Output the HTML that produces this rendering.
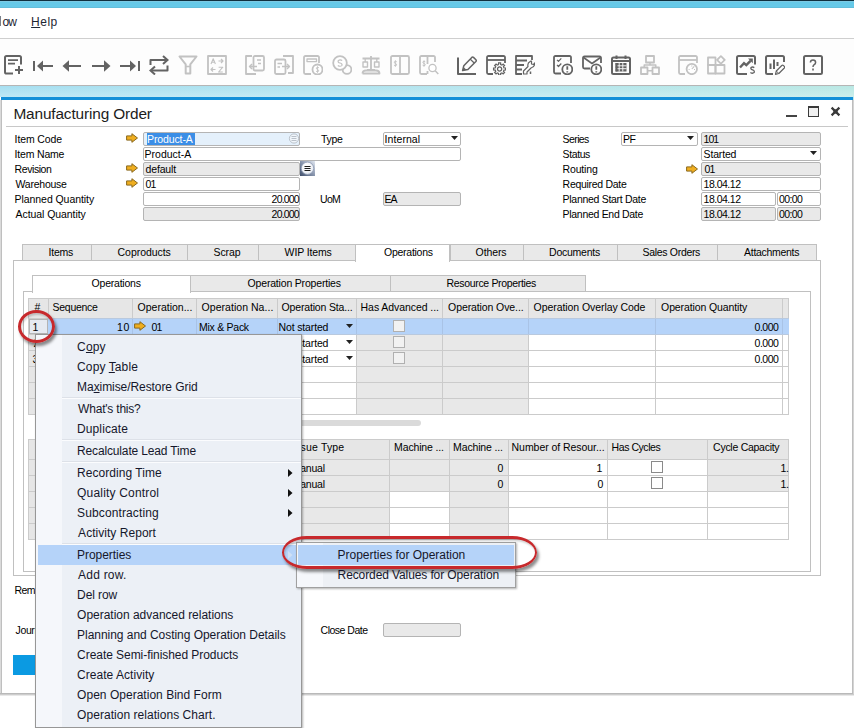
<!DOCTYPE html>
<html><head><meta charset="utf-8"><title>Manufacturing Order</title>
<style>
html,body{margin:0;padding:0;}
body{width:854px;height:728px;overflow:hidden;background:#fff;position:relative;font-family:"Liberation Sans",sans-serif;font-size:11px;}
#r{position:absolute;left:0;top:0;width:854px;height:728px;overflow:hidden;}
#r div,#r svg{position:absolute;}
u{text-decoration:underline;}
</style></head><body><div id="r">
<div style="left:0px;top:0px;width:854px;height:1px;background:#10303f;"></div>
<div style="left:0px;top:1px;width:854px;height:7px;background:#66c9e8;"></div>
<div style="left:0px;top:1px;width:854px;height:1px;background:#7ccae4;"></div>
<div style="left:0px;top:7px;width:854px;height:1px;background:#62bedb;"></div>
<div style="left:0px;top:8px;width:854px;height:30px;background:#fff;"></div>
<div style="left:0px;top:38px;width:854px;height:1px;background:#cfcfcf;"></div>
<div style="left:0px;top:39px;width:854px;height:46px;background:#fdfdfd;"></div>
<div style="left:0px;top:85px;width:854px;height:1px;background:#b5b5b5;"></div>
<div style="left:0px;top:86px;width:854px;height:11px;background:linear-gradient(rgba(255,255,255,0),rgba(255,255,255,0.28)),linear-gradient(to right,#a6dff1,#b4e5ee 55%,#b9e8e4);"></div>
<div style="left:0px;top:16px;width:1px;height:10px;background:#7a808a;"></div>
<div style="left:0px;top:97px;width:854px;height:597px;background:#fff;"></div>
<div style="left:1px;top:97px;width:852px;height:3px;background:#1490d8;"></div>
<div style="left:853px;top:97px;width:1px;height:3px;background:#bfe8e8;"></div>
<div style="left:0px;top:100px;width:1px;height:594px;background:#dadada;"></div>
<div style="left:1px;top:100px;width:1px;height:594px;background:#bfbfbf;"></div>
<div style="left:852px;top:100px;width:1px;height:595px;background:#bdbdbd;"></div>
<div style="left:853px;top:100px;width:1px;height:596px;background:#d4d4d4;"></div>
<div style="left:0px;top:693px;width:853px;height:1px;background:#b9b9b9;"></div>
<div style="left:0px;top:694px;width:854px;height:1px;background:#cdcdcd;"></div>
<div style="left:0px;top:695px;width:854px;height:1px;background:#e8e8e8;"></div>
<div style="left:6px;top:126px;width:842px;height:1px;background:#c8c8c8;"></div>
<div style="left:786px;top:115px;width:11px;height:2px;background:#444;"></div>
<div style="left:808px;top:106px;width:11px;height:11px;background:#f0f0f0;border:1px solid #3a3a3a;box-sizing:border-box;border-top-width:2px;"></div>
<svg style="left:830px;top:106px" width="11" height="11" viewBox="0 0 11 11"><path d="M1.6 1.6 L9.4 9.4 M9.4 1.6 L1.6 9.4" stroke="#3a3a3a" stroke-width="2.2"/><rect x="3.4" y="3.4" width="4.2" height="4.2" fill="#3a3a3a"/></svg>
<div style="left:143px;top:132px;width:157px;height:14px;background:#e4f0fb;border:1px solid #b4b4b4;border-radius:2px;box-sizing:border-box;"></div>
<div style="left:147px;top:133px;width:48px;height:12px;background:#3b8ee6;"></div>
<svg style="left:288px;top:132px" width="12" height="13" viewBox="0 0 12 13"><circle cx="6" cy="6.5" r="4.6" fill="#f1f6fb" stroke="#b3bbc4" stroke-width="0.9"/><path d="M3.5 4.5 H8.5 M3.5 6.5 H8.5 M3.5 8.5 H8.5" stroke="#b3bbc4" stroke-width="0.9"/></svg>
<div style="left:143px;top:147px;width:318px;height:14px;background:#fff;border:1px solid #b4b4b4;border-radius:2px;box-sizing:border-box;"></div>
<div style="left:143px;top:162px;width:157px;height:14px;background:#e9e9e9;border:1px solid #b4b4b4;border-radius:2px;box-sizing:border-box;"></div>
<svg style="left:300px;top:161px" width="15" height="15" viewBox="0 0 15 15"><defs><linearGradient id="gb" x1="1" y1="0" x2="0" y2="1"><stop offset="0" stop-color="#e2e8f1"/><stop offset="0.5" stop-color="#8895ad"/><stop offset="1" stop-color="#3f4e6b"/></linearGradient><radialGradient id="gc" cx="0.45" cy="0.35" r="0.7"><stop offset="0" stop-color="#ffffff"/><stop offset="0.7" stop-color="#eef1f6"/><stop offset="1" stop-color="#c3ccda"/></radialGradient></defs><rect x="0" y="0" width="15" height="15" fill="url(#gb)"/><circle cx="7.5" cy="7.3" r="6.2" fill="url(#gc)" stroke="#8e9bb3" stroke-width="0.8"/><path d="M4.5 5.5 H10.5 M4.5 7.5 H10.5 M4.5 9.5 H10.5" stroke="#1c1c1c" stroke-width="1"/></svg>
<div style="left:143px;top:177px;width:157px;height:14px;background:#fff;border:1px solid #b4b4b4;border-radius:2px;box-sizing:border-box;"></div>
<div style="left:143px;top:192px;width:157px;height:14px;background:#fff;border:1px solid #b4b4b4;border-radius:2px;box-sizing:border-box;"></div>
<div style="left:143px;top:207px;width:157px;height:14px;background:#e9e9e9;border:1px solid #b4b4b4;border-radius:2px;box-sizing:border-box;"></div>
<svg style="left:126px;top:133px" width="12" height="10" viewBox="0 0 12 10"><path d="M0.6 2.9 H5.9 V0.7 L11.5 5 L5.9 9.3 V7.1 H0.6 Z" fill="#efae20" stroke="#8a681c" stroke-width="1" stroke-linejoin="round"/></svg>
<svg style="left:126px;top:163px" width="12" height="10" viewBox="0 0 12 10"><path d="M0.6 2.9 H5.9 V0.7 L11.5 5 L5.9 9.3 V7.1 H0.6 Z" fill="#efae20" stroke="#8a681c" stroke-width="1" stroke-linejoin="round"/></svg>
<svg style="left:126px;top:178px" width="12" height="10" viewBox="0 0 12 10"><path d="M0.6 2.9 H5.9 V0.7 L11.5 5 L5.9 9.3 V7.1 H0.6 Z" fill="#efae20" stroke="#8a681c" stroke-width="1" stroke-linejoin="round"/></svg>
<div style="left:383px;top:132px;width:78px;height:14px;background:#fff;border:1px solid #b4b4b4;border-radius:2px;box-sizing:border-box;"></div>
<svg style="left:451px;top:136px" width="7" height="4" viewBox="0 0 7 4"><path d="M0 0 H7 L3.5 4 Z" fill="#222"/></svg>
<div style="left:383px;top:192px;width:78px;height:14px;background:#e9e9e9;border:1px solid #b4b4b4;border-radius:2px;box-sizing:border-box;"></div>
<div style="left:621px;top:132px;width:77px;height:14px;background:#fff;border:1px solid #b4b4b4;border-radius:2px;box-sizing:border-box;"></div>
<svg style="left:687px;top:136px" width="7" height="4" viewBox="0 0 7 4"><path d="M0 0 H7 L3.5 4 Z" fill="#222"/></svg>
<div style="left:701px;top:132px;width:120px;height:14px;background:#e9e9e9;border:1px solid #b4b4b4;border-radius:2px;box-sizing:border-box;"></div>
<div style="left:701px;top:147px;width:120px;height:14px;background:#fff;border:1px solid #b4b4b4;border-radius:2px;box-sizing:border-box;"></div>
<svg style="left:810px;top:151px" width="7" height="4" viewBox="0 0 7 4"><path d="M0 0 H7 L3.5 4 Z" fill="#222"/></svg>
<div style="left:701px;top:162px;width:120px;height:14px;background:#e9e9e9;border:1px solid #b4b4b4;border-radius:2px;box-sizing:border-box;"></div>
<svg style="left:686px;top:163.5px" width="12" height="10" viewBox="0 0 12 10"><path d="M0.6 2.9 H5.9 V0.7 L11.5 5 L5.9 9.3 V7.1 H0.6 Z" fill="#efae20" stroke="#8a681c" stroke-width="1" stroke-linejoin="round"/></svg>
<div style="left:701px;top:177px;width:120px;height:14px;background:#fff;border:1px solid #b4b4b4;border-radius:2px;box-sizing:border-box;"></div>
<div style="left:701px;top:192px;width:75px;height:14px;background:#fff;border:1px solid #b4b4b4;border-radius:2px;box-sizing:border-box;"></div>
<div style="left:777px;top:192px;width:44px;height:14px;background:#fff;border:1px solid #b4b4b4;border-radius:2px;box-sizing:border-box;"></div>
<div style="left:701px;top:207px;width:75px;height:14px;background:#e9e9e9;border:1px solid #b4b4b4;border-radius:2px;box-sizing:border-box;"></div>
<div style="left:777px;top:207px;width:44px;height:14px;background:#e9e9e9;border:1px solid #b4b4b4;border-radius:2px;box-sizing:border-box;"></div>
<div style="left:13px;top:260px;width:808px;height:316px;background:#fff;border:1px solid #c0c0c0;box-sizing:border-box;"></div>
<div style="left:22px;top:244px;width:70px;height:17px;background:#e9e9e9;border:1px solid #c0c0c0;box-sizing:border-box;"></div>
<div style="left:91px;top:244px;width:97px;height:17px;background:#e9e9e9;border:1px solid #c0c0c0;box-sizing:border-box;"></div>
<div style="left:187px;top:244px;width:72px;height:17px;background:#e9e9e9;border:1px solid #c0c0c0;box-sizing:border-box;"></div>
<div style="left:258px;top:244px;width:98px;height:17px;background:#e9e9e9;border:1px solid #c0c0c0;box-sizing:border-box;"></div>
<div style="left:450px;top:244px;width:74px;height:17px;background:#e9e9e9;border:1px solid #c0c0c0;box-sizing:border-box;"></div>
<div style="left:523px;top:244px;width:95px;height:17px;background:#e9e9e9;border:1px solid #c0c0c0;box-sizing:border-box;"></div>
<div style="left:617px;top:244px;width:101px;height:17px;background:#e9e9e9;border:1px solid #c0c0c0;box-sizing:border-box;"></div>
<div style="left:717px;top:244px;width:100px;height:17px;background:#e9e9e9;border:1px solid #c0c0c0;box-sizing:border-box;"></div>
<div style="left:355px;top:244px;width:95px;height:18px;background:#fff;border:1px solid #c0c0c0;box-sizing:border-box;border-bottom:none;"></div>
<div style="left:23px;top:291px;width:788px;height:281px;background:#fff;border:1px solid #c0c0c0;box-sizing:border-box;"></div>
<div style="left:190px;top:275px;width:201px;height:17px;background:#e9e9e9;border:1px solid #c0c0c0;box-sizing:border-box;"></div>
<div style="left:390px;top:275px;width:196px;height:17px;background:#e9e9e9;border:1px solid #c0c0c0;box-sizing:border-box;"></div>
<div style="left:32px;top:275px;width:159px;height:18px;background:#fff;border:1px solid #c0c0c0;box-sizing:border-box;border-bottom:none;"></div>
<div style="left:28px;top:298px;width:761px;height:117px;background:#cbcbcb;"></div>
<div style="left:29px;top:299px;width:19px;height:19px;background:#e6e6e6;"></div>
<div style="left:49px;top:299px;width:83px;height:19px;background:#e6e6e6;"></div>
<div style="left:133px;top:299px;width:63px;height:19px;background:#e6e6e6;"></div>
<div style="left:197px;top:299px;width:80px;height:19px;background:#e6e6e6;"></div>
<div style="left:278px;top:299px;width:78px;height:19px;background:#e6e6e6;"></div>
<div style="left:357px;top:299px;width:85px;height:19px;background:#e6e6e6;"></div>
<div style="left:443px;top:299px;width:85px;height:19px;background:#e6e6e6;"></div>
<div style="left:529px;top:299px;width:126px;height:19px;background:#e6e6e6;"></div>
<div style="left:656px;top:299px;width:126px;height:19px;background:#e6e6e6;"></div>
<div style="left:783px;top:299px;width:5px;height:19px;background:#e6e6e6;"></div>
<div style="left:29px;top:319px;width:19px;height:15px;background:#e8eef6;"></div>
<div style="left:49px;top:319px;width:83px;height:15px;background:#b5d3f9;"></div>
<div style="left:133px;top:319px;width:63px;height:15px;background:#b5d3f9;"></div>
<div style="left:197px;top:319px;width:80px;height:15px;background:#b5d3f9;"></div>
<div style="left:278px;top:319px;width:78px;height:15px;background:#b5d3f9;"></div>
<div style="left:357px;top:319px;width:85px;height:15px;background:#b5d3f9;"></div>
<div style="left:443px;top:319px;width:85px;height:15px;background:#b5d3f9;"></div>
<div style="left:529px;top:319px;width:126px;height:15px;background:#b5d3f9;"></div>
<div style="left:656px;top:319px;width:126px;height:15px;background:#b5d3f9;"></div>
<div style="left:783px;top:319px;width:5px;height:15px;background:#b5d3f9;"></div>
<div style="left:29px;top:335px;width:19px;height:15px;background:#e6e6e6;"></div>
<div style="left:49px;top:335px;width:83px;height:15px;background:#fff;"></div>
<div style="left:133px;top:335px;width:63px;height:15px;background:#fff;"></div>
<div style="left:197px;top:335px;width:80px;height:15px;background:#fff;"></div>
<div style="left:278px;top:335px;width:78px;height:15px;background:#fff;"></div>
<div style="left:357px;top:335px;width:85px;height:15px;background:#e8e8e8;"></div>
<div style="left:443px;top:335px;width:85px;height:15px;background:#e8e8e8;"></div>
<div style="left:529px;top:335px;width:126px;height:15px;background:#fff;"></div>
<div style="left:656px;top:335px;width:126px;height:15px;background:#fff;"></div>
<div style="left:783px;top:335px;width:5px;height:15px;background:#fff;"></div>
<div style="left:29px;top:351px;width:19px;height:15px;background:#e6e6e6;"></div>
<div style="left:49px;top:351px;width:83px;height:15px;background:#fff;"></div>
<div style="left:133px;top:351px;width:63px;height:15px;background:#fff;"></div>
<div style="left:197px;top:351px;width:80px;height:15px;background:#fff;"></div>
<div style="left:278px;top:351px;width:78px;height:15px;background:#fff;"></div>
<div style="left:357px;top:351px;width:85px;height:15px;background:#e8e8e8;"></div>
<div style="left:443px;top:351px;width:85px;height:15px;background:#e8e8e8;"></div>
<div style="left:529px;top:351px;width:126px;height:15px;background:#fff;"></div>
<div style="left:656px;top:351px;width:126px;height:15px;background:#fff;"></div>
<div style="left:783px;top:351px;width:5px;height:15px;background:#fff;"></div>
<div style="left:29px;top:367px;width:19px;height:15px;background:#e6e6e6;"></div>
<div style="left:49px;top:367px;width:83px;height:15px;background:#fff;"></div>
<div style="left:133px;top:367px;width:63px;height:15px;background:#fff;"></div>
<div style="left:197px;top:367px;width:80px;height:15px;background:#fff;"></div>
<div style="left:278px;top:367px;width:78px;height:15px;background:#fff;"></div>
<div style="left:357px;top:367px;width:85px;height:15px;background:#e8e8e8;"></div>
<div style="left:443px;top:367px;width:85px;height:15px;background:#e8e8e8;"></div>
<div style="left:529px;top:367px;width:126px;height:15px;background:#fff;"></div>
<div style="left:656px;top:367px;width:126px;height:15px;background:#fff;"></div>
<div style="left:783px;top:367px;width:5px;height:15px;background:#fff;"></div>
<div style="left:29px;top:383px;width:19px;height:15px;background:#e6e6e6;"></div>
<div style="left:49px;top:383px;width:83px;height:15px;background:#fff;"></div>
<div style="left:133px;top:383px;width:63px;height:15px;background:#fff;"></div>
<div style="left:197px;top:383px;width:80px;height:15px;background:#fff;"></div>
<div style="left:278px;top:383px;width:78px;height:15px;background:#fff;"></div>
<div style="left:357px;top:383px;width:85px;height:15px;background:#e8e8e8;"></div>
<div style="left:443px;top:383px;width:85px;height:15px;background:#e8e8e8;"></div>
<div style="left:529px;top:383px;width:126px;height:15px;background:#fff;"></div>
<div style="left:656px;top:383px;width:126px;height:15px;background:#fff;"></div>
<div style="left:783px;top:383px;width:5px;height:15px;background:#fff;"></div>
<div style="left:29px;top:399px;width:19px;height:15px;background:#e6e6e6;"></div>
<div style="left:49px;top:399px;width:83px;height:15px;background:#fff;"></div>
<div style="left:133px;top:399px;width:63px;height:15px;background:#fff;"></div>
<div style="left:197px;top:399px;width:80px;height:15px;background:#fff;"></div>
<div style="left:278px;top:399px;width:78px;height:15px;background:#fff;"></div>
<div style="left:357px;top:399px;width:85px;height:15px;background:#e8e8e8;"></div>
<div style="left:443px;top:399px;width:85px;height:15px;background:#e8e8e8;"></div>
<div style="left:529px;top:399px;width:126px;height:15px;background:#fff;"></div>
<div style="left:656px;top:399px;width:126px;height:15px;background:#fff;"></div>
<div style="left:783px;top:399px;width:5px;height:15px;background:#fff;"></div>
<div style="left:48px;top:318px;width:741px;height:17px;background:#b5d3f9;"></div>
<div style="left:132px;top:318px;width:1px;height:17px;background:#a9c3e6;"></div>
<div style="left:196px;top:318px;width:1px;height:17px;background:#a9c3e6;"></div>
<div style="left:277px;top:318px;width:1px;height:17px;background:#a9c3e6;"></div>
<div style="left:356px;top:318px;width:1px;height:17px;background:#a9c3e6;"></div>
<div style="left:442px;top:318px;width:1px;height:17px;background:#a9c3e6;"></div>
<div style="left:528px;top:318px;width:1px;height:17px;background:#a9c3e6;"></div>
<div style="left:655px;top:318px;width:1px;height:17px;background:#a9c3e6;"></div>
<div style="left:782px;top:318px;width:1px;height:17px;background:#a9c3e6;"></div>
<div style="left:48px;top:318px;width:741px;height:1px;background:#b9c9de;"></div>
<div style="left:48px;top:334px;width:741px;height:1px;background:#b9c9de;"></div>
<div style="left:29px;top:319px;width:19px;height:15px;background:#e6eaf1;border:1px solid #b4b4b4;box-sizing:border-box;"></div>
<svg style="left:134px;top:321px" width="12" height="10" viewBox="0 0 12 10"><path d="M0.6 2.9 H5.9 V0.7 L11.5 5 L5.9 9.3 V7.1 H0.6 Z" fill="#efae20" stroke="#8a681c" stroke-width="1" stroke-linejoin="round"/></svg>
<svg style="left:346px;top:323.5px" width="7" height="4" viewBox="0 0 7 4"><path d="M0 0 H7 L3.5 4 Z" fill="#222"/></svg>
<div style="left:393px;top:320px;width:12px;height:12px;background:#f2f2f2;border:1px solid #b0b0b0;box-sizing:border-box;"></div>
<svg style="left:346px;top:339.5px" width="7" height="4" viewBox="0 0 7 4"><path d="M0 0 H7 L3.5 4 Z" fill="#222"/></svg>
<div style="left:393px;top:336px;width:12px;height:12px;background:#f2f2f2;border:1px solid #b0b0b0;box-sizing:border-box;"></div>
<svg style="left:346px;top:355.5px" width="7" height="4" viewBox="0 0 7 4"><path d="M0 0 H7 L3.5 4 Z" fill="#222"/></svg>
<div style="left:393px;top:352px;width:12px;height:12px;background:#f2f2f2;border:1px solid #b0b0b0;box-sizing:border-box;"></div>
<div style="left:240px;top:420px;width:181px;height:6px;background:#dadada;border-radius:3px;"></div>
<div style="left:28px;top:439px;width:761px;height:101px;background:#cbcbcb;"></div>
<div style="left:29px;top:440px;width:19px;height:19px;background:#e6e6e6;"></div>
<div style="left:49px;top:440px;width:83px;height:19px;background:#e6e6e6;"></div>
<div style="left:133px;top:440px;width:63px;height:19px;background:#e6e6e6;"></div>
<div style="left:197px;top:440px;width:91px;height:19px;background:#e6e6e6;"></div>
<div style="left:289px;top:440px;width:100px;height:19px;background:#e6e6e6;"></div>
<div style="left:390px;top:440px;width:59px;height:19px;background:#e6e6e6;"></div>
<div style="left:450px;top:440px;width:58px;height:19px;background:#e6e6e6;"></div>
<div style="left:509px;top:440px;width:98px;height:19px;background:#e6e6e6;"></div>
<div style="left:608px;top:440px;width:99px;height:19px;background:#e6e6e6;"></div>
<div style="left:708px;top:440px;width:80px;height:19px;background:#e6e6e6;"></div>
<div style="left:29px;top:460px;width:19px;height:15px;background:#e6e6e6;"></div>
<div style="left:49px;top:460px;width:83px;height:15px;background:#e8e8e8;"></div>
<div style="left:133px;top:460px;width:63px;height:15px;background:#e8e8e8;"></div>
<div style="left:197px;top:460px;width:91px;height:15px;background:#e8e8e8;"></div>
<div style="left:289px;top:460px;width:100px;height:15px;background:#e8e8e8;"></div>
<div style="left:390px;top:460px;width:59px;height:15px;background:#e8e8e8;"></div>
<div style="left:450px;top:460px;width:58px;height:15px;background:#e8e8e8;"></div>
<div style="left:509px;top:460px;width:98px;height:15px;background:#fff;"></div>
<div style="left:608px;top:460px;width:99px;height:15px;background:#fff;"></div>
<div style="left:708px;top:460px;width:80px;height:15px;background:#e8e8e8;"></div>
<div style="left:29px;top:476px;width:19px;height:15px;background:#e6e6e6;"></div>
<div style="left:49px;top:476px;width:83px;height:15px;background:#e8e8e8;"></div>
<div style="left:133px;top:476px;width:63px;height:15px;background:#e8e8e8;"></div>
<div style="left:197px;top:476px;width:91px;height:15px;background:#e8e8e8;"></div>
<div style="left:289px;top:476px;width:100px;height:15px;background:#e8e8e8;"></div>
<div style="left:390px;top:476px;width:59px;height:15px;background:#e8e8e8;"></div>
<div style="left:450px;top:476px;width:58px;height:15px;background:#e8e8e8;"></div>
<div style="left:509px;top:476px;width:98px;height:15px;background:#fff;"></div>
<div style="left:608px;top:476px;width:99px;height:15px;background:#fff;"></div>
<div style="left:708px;top:476px;width:80px;height:15px;background:#e8e8e8;"></div>
<div style="left:29px;top:492px;width:19px;height:15px;background:#e6e6e6;"></div>
<div style="left:49px;top:492px;width:83px;height:15px;background:#fff;"></div>
<div style="left:133px;top:492px;width:63px;height:15px;background:#fff;"></div>
<div style="left:197px;top:492px;width:91px;height:15px;background:#fff;"></div>
<div style="left:289px;top:492px;width:100px;height:15px;background:#e8e8e8;"></div>
<div style="left:390px;top:492px;width:59px;height:15px;background:#fff;"></div>
<div style="left:450px;top:492px;width:58px;height:15px;background:#e8e8e8;"></div>
<div style="left:509px;top:492px;width:98px;height:15px;background:#fff;"></div>
<div style="left:608px;top:492px;width:99px;height:15px;background:#fff;"></div>
<div style="left:708px;top:492px;width:80px;height:15px;background:#fff;"></div>
<div style="left:29px;top:508px;width:19px;height:15px;background:#e6e6e6;"></div>
<div style="left:49px;top:508px;width:83px;height:15px;background:#fff;"></div>
<div style="left:133px;top:508px;width:63px;height:15px;background:#fff;"></div>
<div style="left:197px;top:508px;width:91px;height:15px;background:#fff;"></div>
<div style="left:289px;top:508px;width:100px;height:15px;background:#e8e8e8;"></div>
<div style="left:390px;top:508px;width:59px;height:15px;background:#fff;"></div>
<div style="left:450px;top:508px;width:58px;height:15px;background:#e8e8e8;"></div>
<div style="left:509px;top:508px;width:98px;height:15px;background:#fff;"></div>
<div style="left:608px;top:508px;width:99px;height:15px;background:#fff;"></div>
<div style="left:708px;top:508px;width:80px;height:15px;background:#fff;"></div>
<div style="left:29px;top:524px;width:19px;height:15px;background:#e6e6e6;"></div>
<div style="left:49px;top:524px;width:83px;height:15px;background:#fff;"></div>
<div style="left:133px;top:524px;width:63px;height:15px;background:#fff;"></div>
<div style="left:197px;top:524px;width:91px;height:15px;background:#fff;"></div>
<div style="left:289px;top:524px;width:100px;height:15px;background:#e8e8e8;"></div>
<div style="left:390px;top:524px;width:59px;height:15px;background:#fff;"></div>
<div style="left:450px;top:524px;width:58px;height:15px;background:#e8e8e8;"></div>
<div style="left:509px;top:524px;width:98px;height:15px;background:#fff;"></div>
<div style="left:608px;top:524px;width:99px;height:15px;background:#fff;"></div>
<div style="left:708px;top:524px;width:80px;height:15px;background:#fff;"></div>
<div style="left:651px;top:461px;width:12px;height:12px;background:#fff;border:1px solid #8a8a8a;box-sizing:border-box;"></div>
<div style="left:651px;top:477px;width:12px;height:12px;background:#fff;border:1px solid #8a8a8a;box-sizing:border-box;"></div>
<div style="left:383px;top:623px;width:78px;height:14px;background:#e9e9e9;border:1px solid #b4b4b4;border-radius:2px;box-sizing:border-box;"></div>
<div style="left:13px;top:655px;width:75px;height:20px;background:#0b9ae2;"></div>
<div style="left:2.4px;top:14.0px;font-size:12px;line-height:16px;color:#1e2633;letter-spacing:-0.9px;white-space:nowrap;">ow</div>
<div style="left:31.1px;top:14.0px;font-size:12px;line-height:16px;color:#1e2633;letter-spacing:0.5px;white-space:nowrap;"><u>H</u>elp</div>
<div style="left:13.4px;top:103.5px;font-size:15.4px;line-height:19.4px;color:#1c1c1c;letter-spacing:-0.144px;white-space:nowrap;">Manufacturing Order</div>
<div style="left:14.6px;top:132.25px;font-size:10.5px;line-height:14.5px;color:#000;letter-spacing:-0.125px;white-space:nowrap;">Item Code</div>
<div style="left:14.6px;top:147.25px;font-size:10.5px;line-height:14.5px;color:#000;letter-spacing:-0.188px;white-space:nowrap;">Item Name</div>
<div style="left:14.6px;top:162.25px;font-size:10.5px;line-height:14.5px;color:#000;letter-spacing:-0.429px;white-space:nowrap;">Revision</div>
<div style="left:15.6px;top:177.25px;font-size:10.5px;line-height:14.5px;color:#000;letter-spacing:-0.25px;white-space:nowrap;">Warehouse</div>
<div style="left:14.6px;top:192.25px;font-size:10.5px;line-height:14.5px;color:#000;letter-spacing:-0.067px;white-space:nowrap;">Planned Quantity</div>
<div style="left:15.6px;top:207.25px;font-size:10.5px;line-height:14.5px;color:#000;letter-spacing:-0.071px;white-space:nowrap;">Actual Quantity</div>
<div style="left:147.1px;top:132.25px;font-size:10.5px;line-height:14.5px;color:#fff;letter-spacing:-0.125px;white-space:nowrap;">Product-A</div>
<div style="left:144.6px;top:147.25px;font-size:10.5px;line-height:14.5px;color:#000;letter-spacing:0.0px;white-space:nowrap;">Product-A</div>
<div style="left:145.6px;top:162.25px;font-size:10.5px;line-height:14.5px;color:#000;letter-spacing:-0.167px;white-space:nowrap;">default</div>
<div style="left:145.6px;top:177.25px;font-size:10.5px;line-height:14.5px;color:#000;letter-spacing:-1.0px;white-space:nowrap;">01</div>
<div style="left:271.6px;top:192.25px;font-size:10.5px;line-height:14.5px;color:#000;letter-spacing:-0.8px;white-space:nowrap;">20.000</div>
<div style="left:271.6px;top:207.25px;font-size:10.5px;line-height:14.5px;color:#000;letter-spacing:-0.8px;white-space:nowrap;">20.000</div>
<div style="left:321.1px;top:132.25px;font-size:10.5px;line-height:14.5px;color:#000;letter-spacing:-0.333px;white-space:nowrap;">Type</div>
<div style="left:384.6px;top:132.25px;font-size:10.5px;line-height:14.5px;color:#000;letter-spacing:0.071px;white-space:nowrap;">Internal</div>
<div style="left:320.1px;top:192.25px;font-size:10.5px;line-height:14.5px;color:#000;letter-spacing:-0.75px;white-space:nowrap;">UoM</div>
<div style="left:384.6px;top:192.25px;font-size:10.5px;line-height:14.5px;color:#000;letter-spacing:-1.0px;white-space:nowrap;">EA</div>
<div style="left:562.6px;top:132.25px;font-size:10.5px;line-height:14.5px;color:#000;letter-spacing:-0.6px;white-space:nowrap;">Series</div>
<div style="left:562.6px;top:147.25px;font-size:10.5px;line-height:14.5px;color:#000;letter-spacing:-0.4px;white-space:nowrap;">Status</div>
<div style="left:562.6px;top:162.25px;font-size:10.5px;line-height:14.5px;color:#000;letter-spacing:-0.167px;white-space:nowrap;">Routing</div>
<div style="left:562.6px;top:177.25px;font-size:10.5px;line-height:14.5px;color:#000;letter-spacing:-0.292px;white-space:nowrap;">Required Date</div>
<div style="left:562.6px;top:192.25px;font-size:10.5px;line-height:14.5px;color:#000;letter-spacing:-0.294px;white-space:nowrap;">Planned Start Date</div>
<div style="left:562.6px;top:207.25px;font-size:10.5px;line-height:14.5px;color:#000;letter-spacing:-0.3px;white-space:nowrap;">Planned End Date</div>
<div style="left:623.1px;top:132.25px;font-size:10.5px;line-height:14.5px;color:#000;letter-spacing:-0.5px;white-space:nowrap;">PF</div>
<div style="left:703.6px;top:132.25px;font-size:10.5px;line-height:14.5px;color:#000;letter-spacing:-1.0px;white-space:nowrap;">101</div>
<div style="left:703.6px;top:147.25px;font-size:10.5px;line-height:14.5px;color:#000;letter-spacing:-0.167px;white-space:nowrap;">Started</div>
<div style="left:704.6px;top:162.25px;font-size:10.5px;line-height:14.5px;color:#000;letter-spacing:-1.0px;white-space:nowrap;">01</div>
<div style="left:703.6px;top:177.25px;font-size:10.5px;line-height:14.5px;color:#000;letter-spacing:-0.5px;white-space:nowrap;">18.04.12</div>
<div style="left:703.6px;top:192.25px;font-size:10.5px;line-height:14.5px;color:#000;letter-spacing:-0.5px;white-space:nowrap;">18.04.12</div>
<div style="left:779.1px;top:192.25px;font-size:10.5px;line-height:14.5px;color:#000;letter-spacing:-0.625px;white-space:nowrap;">00:00</div>
<div style="left:703.6px;top:207.25px;font-size:10.5px;line-height:14.5px;color:#000;letter-spacing:-0.5px;white-space:nowrap;">18.04.12</div>
<div style="left:779.1px;top:207.25px;font-size:10.5px;line-height:14.5px;color:#000;letter-spacing:-0.625px;white-space:nowrap;">00:00</div>
<div style="left:48.6px;top:245.25px;font-size:10.5px;line-height:14.5px;color:#000;letter-spacing:-0.25px;white-space:nowrap;">Items</div>
<div style="left:117.6px;top:245.25px;font-size:10.5px;line-height:14.5px;color:#000;letter-spacing:-0.056px;white-space:nowrap;">Coproducts</div>
<div style="left:213.6px;top:245.25px;font-size:10.5px;line-height:14.5px;color:#000;letter-spacing:-0.125px;white-space:nowrap;">Scrap</div>
<div style="left:284.6px;top:245.25px;font-size:10.5px;line-height:14.5px;color:#000;letter-spacing:-0.125px;white-space:nowrap;">WIP Items</div>
<div style="left:475.6px;top:245.25px;font-size:10.5px;line-height:14.5px;color:#000;letter-spacing:-0.1px;white-space:nowrap;">Others</div>
<div style="left:549.1px;top:245.25px;font-size:10.5px;line-height:14.5px;color:#000;letter-spacing:-0.25px;white-space:nowrap;">Documents</div>
<div style="left:642.6px;top:245.25px;font-size:10.5px;line-height:14.5px;color:#000;letter-spacing:-0.318px;white-space:nowrap;">Sales Orders</div>
<div style="left:744.1px;top:245.25px;font-size:10.5px;line-height:14.5px;color:#000;letter-spacing:-0.3px;white-space:nowrap;">Attachments</div>
<div style="left:384.1px;top:245.25px;font-size:10.5px;line-height:14.5px;color:#000;letter-spacing:-0.278px;white-space:nowrap;">Operations</div>
<div style="left:91.6px;top:276.25px;font-size:10.5px;line-height:14.5px;color:#000;letter-spacing:-0.222px;white-space:nowrap;">Operations</div>
<div style="left:247.6px;top:276.25px;font-size:10.5px;line-height:14.5px;color:#000;letter-spacing:-0.184px;white-space:nowrap;">Operation Properties</div>
<div style="left:446.6px;top:276.25px;font-size:10.5px;line-height:14.5px;color:#000;letter-spacing:-0.333px;white-space:nowrap;">Resource Properties</div>
<div style="left:34.6px;top:299.75px;font-size:10.5px;line-height:14.5px;color:#000;letter-spacing:-0.5px;white-space:nowrap;">#</div>
<div style="left:52.6px;top:299.75px;font-size:10.5px;line-height:14.5px;color:#000;letter-spacing:-0.286px;white-space:nowrap;">Sequence</div>
<div style="left:137.6px;top:299.75px;font-size:10.5px;line-height:14.5px;color:#000;letter-spacing:0.0px;white-space:nowrap;">Operation...</div>
<div style="left:201.6px;top:299.75px;font-size:10.5px;line-height:14.5px;color:#000;letter-spacing:0.036px;white-space:nowrap;">Operation Na...</div>
<div style="left:281.6px;top:299.75px;font-size:10.5px;line-height:14.5px;color:#000;letter-spacing:-0.167px;white-space:nowrap;">Operation Sta...</div>
<div style="left:360.6px;top:299.75px;font-size:10.5px;line-height:14.5px;color:#000;letter-spacing:-0.067px;white-space:nowrap;">Has Advanced ...</div>
<div style="left:448.1px;top:299.75px;font-size:10.5px;line-height:14.5px;color:#000;letter-spacing:-0.1px;white-space:nowrap;">Operation Ove...</div>
<div style="left:533.6px;top:299.75px;font-size:10.5px;line-height:14.5px;color:#000;letter-spacing:-0.071px;white-space:nowrap;">Operation Overlay Code</div>
<div style="left:661.1px;top:299.75px;font-size:10.5px;line-height:14.5px;color:#000;letter-spacing:-0.118px;white-space:nowrap;">Operation Quantity</div>
<div style="left:32.6px;top:319.75px;font-size:10.5px;line-height:14.5px;color:#000;letter-spacing:0.0px;white-space:nowrap;">1</div>
<div style="left:117.1px;top:319.75px;font-size:10.5px;line-height:14.5px;color:#000;letter-spacing:0.5px;white-space:nowrap;">10</div>
<div style="left:151.6px;top:319.75px;font-size:10.5px;line-height:14.5px;color:#000;letter-spacing:-1.0px;white-space:nowrap;">01</div>
<div style="left:199.1px;top:319.75px;font-size:10.5px;line-height:14.5px;color:#000;letter-spacing:-0.278px;white-space:nowrap;">Mix &amp; Pack</div>
<div style="left:278.6px;top:319.75px;font-size:10.5px;line-height:14.5px;color:#000;letter-spacing:-0.15px;white-space:nowrap;">Not started</div>
<div style="left:754.6px;top:319.75px;font-size:10.5px;line-height:14.5px;color:#000;letter-spacing:-0.5px;white-space:nowrap;">0.000</div>
<div style="left:278.6px;top:335.75px;font-size:10.5px;line-height:14.5px;color:#000;letter-spacing:-0.15px;white-space:nowrap;">Not started</div>
<div style="left:754.6px;top:335.75px;font-size:10.5px;line-height:14.5px;color:#000;letter-spacing:-0.5px;white-space:nowrap;">0.000</div>
<div style="left:278.6px;top:351.75px;font-size:10.5px;line-height:14.5px;color:#000;letter-spacing:-0.15px;white-space:nowrap;">Not started</div>
<div style="left:754.6px;top:351.75px;font-size:10.5px;line-height:14.5px;color:#000;letter-spacing:-0.5px;white-space:nowrap;">0.000</div>
<div style="left:33.6px;top:335.75px;font-size:10.5px;line-height:14.5px;color:#000;letter-spacing:-1.0px;white-space:nowrap;">2</div>
<div style="left:32.6px;top:351.75px;font-size:10.5px;line-height:14.5px;color:#000;letter-spacing:-1.0px;white-space:nowrap;">3</div>
<div style="left:292.1px;top:440.25px;font-size:10.5px;line-height:14.5px;color:#000;letter-spacing:0.167px;white-space:nowrap;">Issue Type</div>
<div style="left:394.1px;top:440.25px;font-size:10.5px;line-height:14.5px;color:#000;letter-spacing:-0.15px;white-space:nowrap;">Machine ...</div>
<div style="left:453.1px;top:440.25px;font-size:10.5px;line-height:14.5px;color:#000;letter-spacing:-0.15px;white-space:nowrap;">Machine ...</div>
<div style="left:511.6px;top:440.25px;font-size:10.5px;line-height:14.5px;color:#000;letter-spacing:-0.056px;white-space:nowrap;">Number of Resour...</div>
<div style="left:611.6px;top:440.25px;font-size:10.5px;line-height:14.5px;color:#000;letter-spacing:-0.444px;white-space:nowrap;">Has Cycles</div>
<div style="left:713.1px;top:440.25px;font-size:10.5px;line-height:14.5px;color:#000;letter-spacing:-0.269px;white-space:nowrap;">Cycle Capacity</div>
<div style="left:291.6px;top:460.75px;font-size:10.5px;line-height:14.5px;color:#000;letter-spacing:-0.2px;white-space:nowrap;">Manual</div>
<div style="left:497.6px;top:460.75px;font-size:10.5px;line-height:14.5px;color:#000;letter-spacing:0.0px;white-space:nowrap;">0</div>
<div style="left:596.6px;top:460.75px;font-size:10.5px;line-height:14.5px;color:#000;letter-spacing:2.0px;white-space:nowrap;">1</div>
<div style="left:780.6px;top:460.75px;font-size:10.5px;line-height:14.5px;color:#000;letter-spacing:-0.5px;white-space:nowrap;">1.</div>
<div style="left:291.6px;top:476.75px;font-size:10.5px;line-height:14.5px;color:#000;letter-spacing:-0.2px;white-space:nowrap;">Manual</div>
<div style="left:497.6px;top:476.75px;font-size:10.5px;line-height:14.5px;color:#000;letter-spacing:0.0px;white-space:nowrap;">0</div>
<div style="left:597.6px;top:476.75px;font-size:10.5px;line-height:14.5px;color:#000;letter-spacing:0.0px;white-space:nowrap;">0</div>
<div style="left:780.6px;top:476.75px;font-size:10.5px;line-height:14.5px;color:#000;letter-spacing:-0.5px;white-space:nowrap;">1.</div>
<div style="left:14.6px;top:582.75px;font-size:10.5px;line-height:14.5px;color:#000;letter-spacing:-0.667px;white-space:nowrap;">Remarks</div>
<div style="left:15.6px;top:622.75px;font-size:10.5px;line-height:14.5px;color:#000;letter-spacing:-0.385px;white-space:nowrap;">Journal Remark</div>
<div style="left:320.6px;top:622.75px;font-size:10.5px;line-height:14.5px;color:#000;letter-spacing:-0.5px;white-space:nowrap;">Close Date</div>
<svg style="left:4px;top:55px" width="20" height="20" viewBox="0 0 20 20" fill="none" stroke="#636363" stroke-width="1.8" stroke-linejoin="round"><path d="M17 9.5 V2.6 Q17 1 15.4 1 H2.6 Q1 1 1 2.6 V17 Q1 18.6 2.6 18.6 H9" stroke-width="2"/><path d="M4 5.2 H14 M4 8.6 H11"/><path d="M15 11 V19 M11 15 H19" stroke-width="2"/></svg>
<svg style="left:33px;top:55px" width="20" height="20" viewBox="0 0 20 20" fill="none" stroke="#636363" stroke-width="1.8" stroke-linejoin="round"><path d="M1 6 V16" stroke-width="2"/><path d="M8 11 H20" stroke-width="2"/><path d="M4 11 L10 5.5 V16.5 Z" fill="#636363" stroke="none"/></svg>
<svg style="left:62px;top:55px" width="20" height="20" viewBox="0 0 20 20" fill="none" stroke="#636363" stroke-width="1.8" stroke-linejoin="round"><path d="M5 11 H19" stroke-width="2"/><path d="M0.5 11 L7 5.2 V16.8 Z" fill="#636363" stroke="none"/></svg>
<svg style="left:91px;top:55px" width="20" height="20" viewBox="0 0 20 20" fill="none" stroke="#636363" stroke-width="1.8" stroke-linejoin="round"><path d="M1 11 H15" stroke-width="2"/><path d="M19.5 11 L13 5.2 V16.8 Z" fill="#636363" stroke="none"/></svg>
<svg style="left:120px;top:55px" width="20" height="20" viewBox="0 0 20 20" fill="none" stroke="#636363" stroke-width="1.8" stroke-linejoin="round"><path d="M19 6 V16" stroke-width="2"/><path d="M0 11 H12" stroke-width="2"/><path d="M16 11 L10 5.5 V16.5 Z" fill="#636363" stroke="none"/></svg>
<svg style="left:149px;top:55px" width="20" height="20" viewBox="0 0 20 20" fill="none" stroke="#636363" stroke-width="1.8" stroke-linejoin="round"><path d="M1.5 10 V5 H17" stroke-width="2"/><path d="M14 1 L18.5 5 L14 9" stroke-width="2" stroke-linejoin="miter"/><path d="M18.5 10.5 V15.5 H3" stroke-width="2"/><path d="M6 11.5 L1.5 15.5 L6 19.5" stroke-width="2" stroke-linejoin="miter"/></svg>
<svg style="left:178px;top:55px" width="20" height="20" viewBox="0 0 20 20" fill="none" stroke="#c2c2c2" stroke-width="1.8" stroke-linejoin="round"><path d="M1.5 1.5 H18.5 L12.3 9.3 V18.5 H7.7 V9.3 Z" stroke-width="2"/><path d="M7.7 11.5 H12.3" stroke-width="1.6"/></svg>
<svg style="left:207px;top:55px" width="20" height="20" viewBox="0 0 20 20" fill="none" stroke="#c2c2c2" stroke-width="1.8" stroke-linejoin="round"><rect x="1" y="1" width="18" height="18"/><path d="M11.5 6 H16 M14 4 L16 6 L14 8" stroke-width="1.2"/><path d="M8.5 14.5 H4 M6 12.5 L4 14.5 L6 16.5" stroke-width="1.2"/><path d="M4 9 L6.2 3.8 L8.4 9 M4.8 7.3 H7.6" stroke-width="1.1"/><path d="M11.6 12.2 H15.8 L11.6 17 H15.8" stroke-width="1.1"/></svg>
<svg style="left:245px;top:55px" width="20" height="20" viewBox="0 0 20 20" fill="none" stroke="#c2c2c2" stroke-width="1.8" stroke-linejoin="round"><path d="M7 1 H1 V19 H11"/><rect x="8.5" y="1" width="10.5" height="14.5" rx="1.5"/><path d="M12 5 H16 M13 8.5 H16" stroke-width="1.4"/><path d="M12 11.5 H4.5 M7 9 L4.5 11.5 L7 14" stroke-width="1.4"/></svg>
<svg style="left:274px;top:55px" width="20" height="20" viewBox="0 0 20 20" fill="none" stroke="#c2c2c2" stroke-width="1.8" stroke-linejoin="round"><path d="M9 1 H19 V18 H14"/><rect x="1" y="4.5" width="10.5" height="14.5" rx="1.5"/><path d="M3.5 8.5 H8 M3.5 12 H6" stroke-width="1.4"/><path d="M8 11.5 H15.5 M13 9 L15.5 11.5 L13 14" stroke-width="1.4"/></svg>
<svg style="left:303px;top:55px" width="20" height="20" viewBox="0 0 20 20" fill="none" stroke="#c2c2c2" stroke-width="1.8" stroke-linejoin="round"><path d="M16 8 V2.5 Q16 1 14.5 1 H2.5 Q1 1 1 2.5 V17.5 Q1 19 2.5 19 H8"/><rect x="4" y="4" width="9.5" height="2.6" stroke-width="1.3"/><circle cx="14.5" cy="14.5" r="5" fill="#fff"/><path d="M16 12.8 Q14.5 11.8 13.4 12.8 Q12.8 14 14.5 14.5 Q16.3 15 15.6 16.3 Q14.5 17.2 13 16.2 M14.5 11.3 V17.8" stroke-width="0.9"/></svg>
<svg style="left:332px;top:55px" width="20" height="20" viewBox="0 0 20 20" fill="none" stroke="#c2c2c2" stroke-width="1.8" stroke-linejoin="round"><circle cx="15" cy="14.5" r="4.4"/><circle cx="8" cy="8" r="6.8" fill="#fff"/><path d="M10.2 5.6 Q8 4 6.3 5.6 Q5.4 7.3 8 8 Q10.8 8.8 9.8 10.6 Q8 12 5.8 10.4" stroke-width="1.2"/></svg>
<svg style="left:361px;top:55px" width="20" height="20" viewBox="0 0 20 20" fill="none" stroke="#c2c2c2" stroke-width="1.8" stroke-linejoin="round"><path d="M1.5 3.5 H18.5 M10 1 V15 M6 15 H14 M1.5 18.5 H18.5 Q18.5 15.5 15 15.5 H5 Q1.5 15.5 1.5 18.5"/><rect x="2" y="7" width="4.5" height="5" stroke-width="1.4"/><rect x="13.5" y="7" width="4.5" height="5" stroke-width="1.4"/><path d="M4.2 3.5 V7 M15.8 3.5 V7" stroke-width="1.3"/></svg>
<svg style="left:390px;top:55px" width="20" height="20" viewBox="0 0 20 20" fill="none" stroke="#c2c2c2" stroke-width="1.8" stroke-linejoin="round"><rect x="1" y="1" width="18" height="18" rx="1.5"/><path d="M10 1 V19"/><path d="M6.8 6.8 Q5.4 5.8 4.3 6.8 Q3.8 8 5.4 8.5 Q7.2 9 6.5 10.3 Q5.4 11.2 4 10.2 M5.4 5.3 V11.8" stroke-width="0.9"/></svg>
<svg style="left:419px;top:55px" width="20" height="20" viewBox="0 0 20 20" fill="none" stroke="#c2c2c2" stroke-width="1.8" stroke-linejoin="round"><path d="M16 7 V2.5 Q16 1 14.5 1 H2.5 Q1 1 1 2.5 V17.5 Q1 19 2.5 19 H8"/><path d="M8.5 1 V9 M8.5 16 V19"/><path d="M6.3 6.8 Q5 5.8 3.9 6.8 Q3.4 8 5 8.5 Q6.8 9 6.1 10.3 Q5 11.2 3.6 10.2 M5 5.3 V11.8" stroke-width="0.9"/><circle cx="13.5" cy="13" r="3.6" stroke-width="1.3" fill="#fff"/><path d="M16.2 15.8 L19.3 19" stroke-width="1.5"/></svg>
<svg style="left:457px;top:55px" width="20" height="20" viewBox="0 0 20 20" fill="none" stroke="#636363" stroke-width="1.8" stroke-linejoin="round"><path d="M1 2.5 V19 H19" stroke-width="2"/><path d="M5.6 15.6 L6.8 10.8 L14.8 2.4 Q15.6 1.6 16.5 2.4 L18.9 4.7 Q19.7 5.5 18.9 6.4 L10.9 14.6 Z" stroke-width="1.5"/><path d="M13.2 4.1 L17.2 8" stroke-width="1.3"/><path d="M5.6 15.6 L6.5 12 L9.4 14.7 Z" fill="#636363" stroke="none"/></svg>
<svg style="left:486px;top:55px" width="20" height="20" viewBox="0 0 20 20" fill="none" stroke="#636363" stroke-width="1.8" stroke-linejoin="round"><path d="M19 8 V2.5 Q19 1 17.5 1 H2.5 Q1 1 1 2.5 V17.5 Q1 19 2.5 19 H7"/><path d="M1 5 H19"/><g transform="translate(13.6 14)"><path d="M4.37 -1.08 L6.02 -1.00 L6.02 1.00 L4.37 1.08 L3.86 2.32 L4.96 3.55 L3.55 4.96 L2.32 3.86 L1.08 4.37 L1.00 6.02 L-1.00 6.02 L-1.08 4.37 L-2.32 3.86 L-3.55 4.96 L-4.96 3.55 L-3.86 2.32 L-4.37 1.08 L-6.02 1.00 L-6.02 -1.00 L-4.37 -1.08 L-3.86 -2.32 L-4.96 -3.55 L-3.55 -4.96 L-2.32 -3.86 L-1.08 -4.37 L-1.00 -6.02 L1.00 -6.02 L1.08 -4.37 L2.32 -3.86 L3.55 -4.96 L4.96 -3.55 L3.86 -2.32 Z" stroke-width="1.25" fill="#fff" stroke-linejoin="miter"/><circle r="2.1" stroke-width="1.3"/></g></svg>
<svg style="left:515px;top:55px" width="20" height="20" viewBox="0 0 20 20" fill="none" stroke="#636363" stroke-width="1.8" stroke-linejoin="round"><path d="M17 5 V1 H1 V19 H7"/><path d="M1 5.5 H12 M1 10 H9 M1 14.5 H7"/><path d="M8.5 19 V16 L13 11.5 Q12 8 15.5 6.2 L16.5 6 L16.5 9 L18.5 9.5 L19.5 8 Q20 12 16 13 L12 17 V19 Z" stroke-width="1.2" fill="#fff"/><path d="M15.5 19 V16.5" stroke-width="1.5"/></svg>
<svg style="left:553px;top:55px" width="20" height="20" viewBox="0 0 20 20" fill="none" stroke="#636363" stroke-width="1.8" stroke-linejoin="round"><path d="M18 8 V2.5 Q18 1 16.5 1 H2.5 Q1 1 1 2.5 V17 Q1 18.5 2.5 18.5 H8"/><path d="M4 4.8 L5.5 6.3 L8.3 3.3 M4 10 L5.5 11.5 L8.3 8.5" stroke-width="1.2"/><circle cx="14.3" cy="14.3" r="5" fill="#fff" stroke-width="1.8"/><path d="M14.3 11.3 V14.8 M14.3 16.2 V17.4" stroke-width="1.8"/></svg>
<svg style="left:582px;top:55px" width="20" height="20" viewBox="0 0 20 20" fill="none" stroke="#636363" stroke-width="1.8" stroke-linejoin="round"><path d="M19 8 V3 Q19 1.5 17.5 1.5 H2.5 Q1 1.5 1 3 V12 Q1 13.5 2.5 13.5 H8"/><path d="M1.5 2.5 L10 8.5 L18.5 2.5" stroke-width="1.6"/><circle cx="14.3" cy="14.3" r="5" fill="#fff" stroke-width="1.8"/><path d="M14.3 11.3 V14.8 M14.3 16.2 V17.4" stroke-width="1.8"/></svg>
<svg style="left:611px;top:55px" width="20" height="20" viewBox="0 0 20 20" fill="none" stroke="#636363" stroke-width="1.8" stroke-linejoin="round"><rect x="1" y="2.5" width="18" height="16.5" rx="1.5" stroke-width="2"/><path d="M1 6 H19" stroke-width="2"/><path d="M5.5 0.5 V4 M14.5 0.5 V4" stroke-width="2"/><rect x="4.5" y="8" width="11" height="8.5" fill="#636363" stroke="none"/><path d="M8.2 8 V16.5 M11.8 8 V16.5 M4.5 10.8 H15.5 M4.5 13.7 H15.5" stroke="#fff" stroke-width="0.9"/><rect x="4.5" y="8" width="2" height="8.5" fill="#636363" stroke="none"/></svg>
<svg style="left:640px;top:55px" width="20" height="20" viewBox="0 0 20 20" fill="none" stroke="#c2c2c2" stroke-width="1.8" stroke-linejoin="round"><rect x="6" y="1" width="8" height="6.5"/><rect x="1" y="12.5" width="6.5" height="6.5"/><rect x="12.5" y="12.5" width="6.5" height="6.5"/><path d="M10 7.5 V10 M4.2 12.5 V10 H15.8 V12.5 M7.5 15.8 H12.5" stroke-width="1.4"/></svg>
<svg style="left:678px;top:55px" width="20" height="20" viewBox="0 0 20 20" fill="none" stroke="#c2c2c2" stroke-width="1.8" stroke-linejoin="round"><path d="M19 8 V2.5 Q19 1 17.5 1 H2.5 Q1 1 1 2.5 V17.5 Q1 19 2.5 19 H7"/><path d="M1 5 H19"/><circle cx="13.8" cy="14" r="5.2" fill="#fff"/><path d="M13.8 14 L16.3 11.3 M10.6 14.5 H11.6 M16 14.5 H17 M13.8 10.5 V11.5" stroke-width="1.1"/></svg>
<svg style="left:707px;top:55px" width="20" height="20" viewBox="0 0 20 20" fill="none" stroke="#c2c2c2" stroke-width="1.8" stroke-linejoin="round"><rect x="1" y="2.5" width="7.5" height="7.5"/><rect x="1" y="10" width="7.5" height="8.5"/><rect x="8.5" y="10" width="9" height="8.5"/><rect x="11.2" y="2.2" width="5.4" height="5.4" transform="rotate(45 13.9 4.9)"/></svg>
<svg style="left:736px;top:55px" width="20" height="20" viewBox="0 0 20 20" fill="none" stroke="#636363" stroke-width="1.8" stroke-linejoin="round"><path d="M19 9.5 V2.5 Q19 1 17.5 1 H2.5 Q1 1 1 2.5 V17.5 Q1 19 2.5 19 H11" stroke-width="2"/><path d="M4 12.5 L8 8.2 L10.3 10.2 L14.5 5.8" stroke-width="2.4" stroke-linejoin="miter"/><path d="M12 3.5 H16.8 V8.3 Z" fill="#636363" stroke="none"/><path d="M18.3 12.6 Q16.5 11.4 15 12.6 Q14.3 14.2 16.5 14.9 Q19 15.7 18.1 17.6 Q16.5 18.9 14.4 17.5" stroke-width="1.3"/></svg>
<svg style="left:765px;top:55px" width="20" height="20" viewBox="0 0 20 20" fill="none" stroke="#636363" stroke-width="1.8" stroke-linejoin="round"><path d="M19 7 V2.5 Q19 1 17.5 1 H2.5 Q1 1 1 2.5 V17.5 Q1 19 2.5 19 H8" stroke-width="2"/><path d="M5.5 8.5 V14 M9 4.5 V14 M12.5 7 V11" stroke-width="2"/><path d="M10.5 19.3 L11.3 16 L16.8 10.5 Q17.6 9.8 18.4 10.5 L19.3 11.4 Q20 12.2 19.3 13 L13.8 18.5 Z" stroke-width="1.2" fill="#fff"/><path d="M11.3 16 L13.8 18.5" stroke-width="1"/></svg>
<svg style="left:803px;top:55px" width="20" height="20" viewBox="0 0 20 20" fill="none" stroke="#636363" stroke-width="1.8" stroke-linejoin="round"><rect x="1" y="1" width="18" height="18" rx="1.5" stroke-width="2"/><path d="M7.4 7.6 Q7.4 5 10 5 Q12.6 5 12.6 7.4 Q12.6 8.8 11.2 9.6 Q10 10.4 10 12" stroke-width="1.5"/><path d="M10 13.6 V15.4" stroke-width="1.6"/></svg>
<div style="left:35px;top:334px;width:267px;height:394px;background:#ecf0f6;border:1px solid #979797;box-sizing:border-box;box-shadow:1px 1px 2px rgba(0,0,0,0.3);"></div>
<div style="left:36px;top:335px;width:26px;height:392px;background:#f5f7fb;"></div>
<div style="left:62px;top:397px;width:239px;height:1px;background:#dde1e8;"></div>
<div style="left:62px;top:398px;width:239px;height:1px;background:#fbfcfe;"></div>
<div style="left:62px;top:439px;width:239px;height:1px;background:#dde1e8;"></div>
<div style="left:62px;top:440px;width:239px;height:1px;background:#fbfcfe;"></div>
<div style="left:62px;top:461px;width:239px;height:1px;background:#dde1e8;"></div>
<div style="left:62px;top:462px;width:239px;height:1px;background:#fbfcfe;"></div>
<svg style="left:288px;top:469px" width="5" height="8" viewBox="0 0 5 8"><path d="M0 0 L4.5 4 L0 8 Z" fill="#111"/></svg>
<svg style="left:288px;top:489px" width="5" height="8" viewBox="0 0 5 8"><path d="M0 0 L4.5 4 L0 8 Z" fill="#111"/></svg>
<svg style="left:288px;top:509px" width="5" height="8" viewBox="0 0 5 8"><path d="M0 0 L4.5 4 L0 8 Z" fill="#111"/></svg>
<div style="left:62px;top:543px;width:239px;height:1px;background:#dde1e8;"></div>
<div style="left:62px;top:544px;width:239px;height:1px;background:#fbfcfe;"></div>
<div style="left:38px;top:545px;width:262px;height:20px;background:#b5d3f9;"></div>
<svg style="left:288px;top:551px" width="5" height="8" viewBox="0 0 5 8"><path d="M0 0 L4.5 4 L0 8 Z" fill="#cfe0f5"/></svg>
<div style="left:296px;top:542px;width:220px;height:46px;background:#edf0f5;border:1px solid #a0a0a0;box-sizing:border-box;box-shadow:1px 1px 2px rgba(0,0,0,0.3);"></div>
<div style="left:297px;top:543px;width:26px;height:44px;background:#f5f7fb;"></div>
<div style="left:298px;top:545px;width:216px;height:20px;background:#b5d3f9;"></div>
<div style="left:17.5px;top:309.5px;width:37px;height:33px;border:3.4px solid #c7292c;border-radius:50%;box-sizing:border-box;box-shadow:2px 3px 3px rgba(0,0,0,0.45), inset 1px 2px 2px rgba(0,0,0,0.18);"></div>
<div style="left:281.5px;top:536px;width:255px;height:33.3px;border:solid #c7292c;border-width:3.3px 2.9px;border-radius:25px / 16.65px;box-sizing:border-box;box-shadow:2px 3px 3px rgba(0,0,0,0.45), inset 1px 2px 2px rgba(0,0,0,0.18);"></div>
<div style="left:77.1px;top:339.0px;font-size:12px;line-height:16px;color:#15172b;letter-spacing:0.167px;white-space:nowrap;">C<u>o</u>py</div>
<div style="left:77.1px;top:359.0px;font-size:12px;line-height:16px;color:#15172b;letter-spacing:0.1px;white-space:nowrap;">Copy <u>T</u>able</div>
<div style="left:77.1px;top:379.0px;font-size:12px;line-height:16px;color:#15172b;letter-spacing:-0.075px;white-space:nowrap;">Ma<u>x</u>imise/Restore Grid</div>
<div style="left:78.1px;top:401.0px;font-size:12px;line-height:16px;color:#15172b;letter-spacing:-0.209px;white-space:nowrap;">What's this?</div>
<div style="left:77.1px;top:421.0px;font-size:12px;line-height:16px;color:#15172b;letter-spacing:0.088px;white-space:nowrap;">Duplicate</div>
<div style="left:77.1px;top:443.0px;font-size:12px;line-height:16px;color:#15172b;letter-spacing:-0.155px;white-space:nowrap;">Recalculate Lead Time</div>
<div style="left:77.1px;top:465.0px;font-size:12px;line-height:16px;color:#15172b;letter-spacing:0.038px;white-space:nowrap;">Recording Time</div>
<div style="left:77.1px;top:485.0px;font-size:12px;line-height:16px;color:#15172b;letter-spacing:0.179px;white-space:nowrap;">Quality Control</div>
<div style="left:77.1px;top:505.0px;font-size:12px;line-height:16px;color:#15172b;letter-spacing:0.115px;white-space:nowrap;">Subcontracting</div>
<div style="left:78.1px;top:525.0px;font-size:12px;line-height:16px;color:#15172b;letter-spacing:0.036px;white-space:nowrap;">Activity Report</div>
<div style="left:77.1px;top:547.0px;font-size:12px;line-height:16px;color:#15172b;letter-spacing:-0.056px;white-space:nowrap;">Properties</div>
<div style="left:78.1px;top:567.0px;font-size:12px;line-height:16px;color:#15172b;letter-spacing:0.214px;white-space:nowrap;">Add row.</div>
<div style="left:77.1px;top:587.0px;font-size:12px;line-height:16px;color:#15172b;letter-spacing:-0.083px;white-space:nowrap;">Del row</div>
<div style="left:77.1px;top:607.0px;font-size:12px;line-height:16px;color:#15172b;letter-spacing:-0.019px;white-space:nowrap;">Operation advanced relations</div>
<div style="left:77.1px;top:627.0px;font-size:12px;line-height:16px;color:#15172b;letter-spacing:-0.041px;white-space:nowrap;">Planning and Costing Operation Details</div>
<div style="left:77.1px;top:647.0px;font-size:12px;line-height:16px;color:#15172b;letter-spacing:-0.054px;white-space:nowrap;">Create Semi-finished Products</div>
<div style="left:77.1px;top:667.0px;font-size:12px;line-height:16px;color:#15172b;letter-spacing:0.036px;white-space:nowrap;">Create Activity</div>
<div style="left:77.1px;top:687.0px;font-size:12px;line-height:16px;color:#15172b;letter-spacing:0.022px;white-space:nowrap;">Open Operation Bind Form</div>
<div style="left:77.1px;top:707.0px;font-size:12px;line-height:16px;color:#15172b;letter-spacing:0.04px;white-space:nowrap;">Operation relations Chart.</div>
<div style="left:337.6px;top:547.0px;font-size:12px;line-height:16px;color:#15172b;letter-spacing:-0.017px;white-space:nowrap;">Properties for Operation</div>
<div style="left:337.6px;top:567.0px;font-size:12px;line-height:16px;color:#15172b;letter-spacing:-0.107px;white-space:nowrap;">Recorded Values for Operation</div>
</div></body></html>
